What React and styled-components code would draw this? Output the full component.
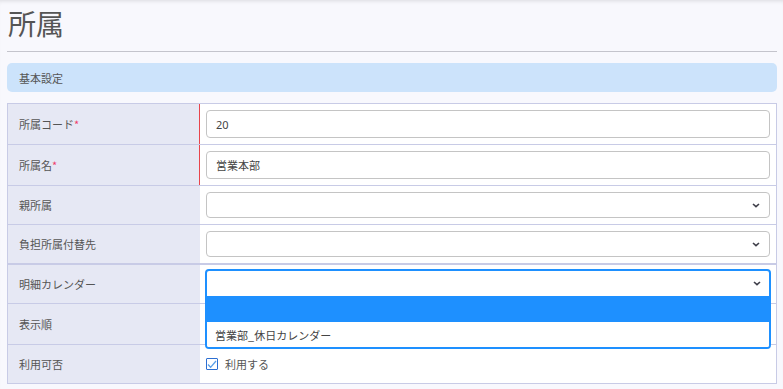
import React from "react";
import styled, { createGlobalStyle } from "styled-components";

const GlobalStyle = createGlobalStyle`
  html, body {
    margin: 0;
    padding: 0;
    background: #f8f8fd;
  }
  body {
    font-family: "Noto Sans", "Noto Sans CJK JP", sans-serif;
    color: #555;
  }
`;

// 上端の影、全体の余白
const Page = styled.div`
  min-height: 389px;
  box-sizing: border-box;
  padding: 0 6px 0 7px;
  box-shadow: inset 0 4px 4px -3px rgba(0, 0, 0, 0.12);
`;

const Title = styled.h1`
  margin: 0;
  padding: 5px 0 0 1px;
  height: 52px;
  box-sizing: border-box;
  font-family: "Noto Sans CJK JP", sans-serif;
  font-weight: 400;
  font-size: 28px;
  line-height: 36px;
  color: #555;
  border-bottom: 1px solid #c4c4cc;
  margin-bottom: 11px;
`;

// 青いセクション見出し
const SectionHead = styled.div`
  height: 29px;
  display: flex;
  align-items: center;
  padding-left: 12px;
  background: #cce3fb;
  border-radius: 5px;
  font-family: "Noto Sans CJK JP", sans-serif;
  font-size: 11px;
  color: #555;
  margin-bottom: 11px;
`;

const Table = styled.div`
  border: 1px solid #c8cbe6;
  background: #fff;
`;

const Row = styled.div`
  display: grid;
  grid-template-columns: 192px 1fr;
  border-top: ${(p) => (p.$thick ? "2px" : "1px")} solid #c8cbe6;
  &:first-child {
    border-top: none;
  }
`;

const Label = styled.div`
  display: flex;
  align-items: center;
  padding-left: 11px;
  background: #e6e8f4;
  font-family: "Noto Sans CJK JP", sans-serif;
  font-size: 11px;
  color: #555;
  border-right: 1px solid ${(p) => (p.$required ? "#e8454c" : "#e6e8f4")};
`;

const Req = styled.span`
  color: #ef3d6b;
`;

const Cell = styled.div`
  padding: 6px;
  display: flex;
  align-items: center;
  min-height: 26px;
`;

const TextInput = styled.div`
  flex: 1;
  height: 28px;
  box-sizing: border-box;
  border: 1px solid #c4c4c4;
  border-radius: 4px;
  background: #fff;
  display: flex;
  align-items: center;
  padding-left: 9px;
  font-family: "Noto Sans", "Noto Sans CJK JP", sans-serif;
  font-size: 11px;
  color: #444;
`;

const Select = styled.div`
  flex: 1;
  height: 26px;
  box-sizing: border-box;
  border: 1px solid #c4c4c4;
  border-radius: 4px;
  background: #fff;
  display: flex;
  align-items: center;
  justify-content: flex-end;
  padding-right: 9px;
`;

const SelectWrap = styled.div`
  flex: 1;
  position: relative;
  height: 26px;
`;

// 開いたドロップダウン
const Popup = styled.div`
  position: absolute;
  top: -2px;
  left: -1px;
  right: -1px;
  z-index: 5;
  border: 2px solid #1e90ff;
  border-radius: 4px;
  background: #fff;
  overflow: hidden;
`;

const PopupHead = styled.div`
  height: 25px;
  display: flex;
  align-items: center;
  justify-content: flex-end;
  padding-right: 8px;
`;

const Option = styled.div`
  height: ${(p) => p.$h}px;
  display: flex;
  align-items: center;
  padding-left: 8px;
  background: ${(p) => (p.$active ? "#1e90ff" : "#fff")};
  font-family: "Noto Sans CJK JP", sans-serif;
  font-size: 11px;
  color: #444;
`;

const CheckLabel = styled.label`
  display: flex;
  align-items: center;
  gap: 7px;
  font-family: "Noto Sans CJK JP", sans-serif;
  font-size: 11px;
  color: #555;
`;

const Box = styled.span`
  width: 12px;
  height: 12px;
  box-sizing: border-box;
  border: 1px solid #2d6fd2;
  border-radius: 1px;
  display: flex;
  align-items: center;
  justify-content: center;
  background: #fff;
`;

const Chevron = () => (
  <svg width="8" height="5" viewBox="0 0 8 5">
    <path d="M1 1l3 2.6L7 1" fill="none" stroke="#3f3f4a" strokeWidth="1.6" />
  </svg>
);

const App = () => {
  return (
    <>
      <GlobalStyle />
      <Page>
        <Title>所属</Title>
        <SectionHead>基本設定</SectionHead>
        <Table>
          <Row>
            <Label $required>
              所属コード<Req>*</Req>
            </Label>
            <Cell>
              <TextInput>20</TextInput>
            </Cell>
          </Row>
          <Row>
            <Label $required>
              所属名<Req>*</Req>
            </Label>
            <Cell>
              <TextInput>営業本部</TextInput>
            </Cell>
          </Row>
          <Row>
            <Label>親所属</Label>
            <Cell>
              <Select>
                <Chevron />
              </Select>
            </Cell>
          </Row>
          <Row>
            <Label>負担所属付替先</Label>
            <Cell>
              <Select>
                <Chevron />
              </Select>
            </Cell>
          </Row>
          <Row $thick>
            <Label>明細カレンダー</Label>
            <Cell>
              <SelectWrap>
                <Popup>
                  <PopupHead>
                    <Chevron />
                  </PopupHead>
                  <Option $active $h={26} />
                  <Option $h={25}>営業部_休日カレンダー</Option>
                </Popup>
              </SelectWrap>
            </Cell>
          </Row>
          <Row>
            <Label>表示順</Label>
            <Cell>
              <TextInput />
            </Cell>
          </Row>
          <Row>
            <Label>利用可否</Label>
            <Cell>
              <CheckLabel>
                <Box>
                  <svg width="10" height="9" viewBox="0 0 10 9">
                    <path d="M1 4.5l2.6 2.8L9 1" fill="none" stroke="#5aa0ea" strokeWidth="1.3" />
                  </svg>
                </Box>
                利用する
              </CheckLabel>
            </Cell>
          </Row>
        </Table>
      </Page>
    </>
  );
};

export default App;
